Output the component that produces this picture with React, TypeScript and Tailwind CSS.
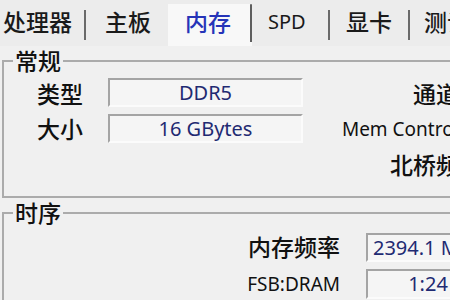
import type { ReactNode } from 'react';

const FONT = "font-['Noto_Sans','Noto_Sans_CJK_SC',sans-serif]";

function Tab({ label, width, pad, active = false, latin = false }: { label: string; width: string; pad: string; active?: boolean; latin?: boolean }) {
  if (active) {
    return (
      <div className={`mt-[4px] flex h-[42px] ${width} items-start bg-[#f8f8f8]`}>
        <span className={`flex-1 ${pad} pt-[3px] text-[23px] font-medium leading-[30px] text-[#2634b8]`}>{label}</span>
        <span className="h-[38px] w-[2px] rounded-t bg-[#5e5e5e]" />
      </div>
    );
  }
  return (
    <div className={`flex h-[46px] ${width} items-start`}>
      <span className={`flex-1 ${pad} pt-[7px] ${latin ? 'text-[20px]' : 'text-[23px] font-medium'} leading-[30px] text-[#1a1a1a]`}>{label}</span>
      <span className="mt-[10px] h-[30px] w-[2px] bg-[#6a6a6a]" />
    </div>
  );
}

function Field({ children, className }: { children?: ReactNode; className: string }) {
  return (
    <div
      className={`flex items-center justify-center border-2 border-t-[#a4a4a4] border-l-[#a4a4a4] border-r-[#fbfbfb] border-b-[#fbfbfb] bg-[#f5f5f5] text-[20px] leading-none text-[#1f2a72] ${className}`}
    >
      {children}
    </div>
  );
}

function Group({ title, height, children }: { title: string; height: string; children: ReactNode }) {
  return (
    <fieldset className={`ml-[2px] ${height} border-2 border-r-0 border-[#ababab]`}>
      <legend className="ml-[9px] px-[2px] text-[23px] font-medium leading-[26px] text-[#111]">{title}</legend>
      {children}
    </fieldset>
  );
}

export default function App() {
  return (
    <div className={`h-[300px] w-[450px] overflow-hidden bg-[#f0f0f0] ${FONT}`}>
      <div className="w-[560px]">
        <div className="flex h-[46px] bg-[#ececec]">
          <Tab label="处理器" width="w-[86px]" pad="pl-[3px]" />
          <div className="flex h-[46px] w-[82px] items-start">
            <span className="pl-[19px] pt-[7px] text-[23px] font-medium leading-[30px] text-[#1a1a1a]">主板</span>
          </div>
          <Tab label="内存" width="w-[84px]" pad="pl-[17px]" active />
          <Tab label="SPD" width="w-[78px]" pad="pl-[16px]" latin />
          <Tab label="显卡" width="w-[80px]" pad="pl-[16px]" />
          <Tab label="测试分数" width="w-[110px]" pad="pl-[14px]" />
        </div>

        <div className="mt-[2px]">
          <Group title="常规" height="h-[150px]">
            <div className="flex flex-col gap-[7px] pt-[4px]">
              <div className="flex h-[29px] items-center">
                <span className="ml-[33px] mt-[4px] w-[46px] text-[23px] font-medium text-[#111]">类型</span>
                <Field className="ml-[25px] h-[29px] w-[195px]">DDR5</Field>
                <span className="mt-[4px] w-[179px] text-right text-[23px] font-medium text-[#111]">通道数</span>
                <Field className="ml-[8px] h-[29px] w-[70px]" />
              </div>
              <div className="flex h-[29px] items-center">
                <span className="ml-[33px] mt-[2px] w-[46px] text-[23px] font-medium text-[#111]">大小</span>
                <Field className="ml-[25px] h-[29px] w-[195px]">16 GBytes</Field>
                <span className="mt-[2px] w-[179px] text-right text-[19px] text-[#111]">Mem Controller</span>
                <Field className="ml-[8px] h-[29px] w-[70px]" />
              </div>
              <div className="flex h-[30px] items-center">
                <span className="ml-[299px] w-[179px] text-right text-[23px] font-medium text-[#111]">北桥频率</span>
                <Field className="ml-[8px] h-[29px] w-[70px]" />
              </div>
            </div>
          </Group>
        </div>

        <div className="mt-[2px]">
          <Group title="时序" height="h-[120px]">
            <div className="flex flex-col gap-[7px] pt-[7px]">
              <div className="flex h-[29px] items-center">
                <span className="w-[336px] text-right text-[23px] font-medium text-[#111]">内存频率</span>
                <Field className="ml-[26px] h-[29px] w-[124px]">2394.1 MHz</Field>
              </div>
              <div className="flex h-[30px] items-center">
                <span className="w-[336px] text-right text-[19px] text-[#111]">FSB:DRAM</span>
                <Field className="ml-[26px] h-[30px] w-[124px]">1:24</Field>
              </div>
            </div>
          </Group>
        </div>
      </div>
    </div>
  );
}
